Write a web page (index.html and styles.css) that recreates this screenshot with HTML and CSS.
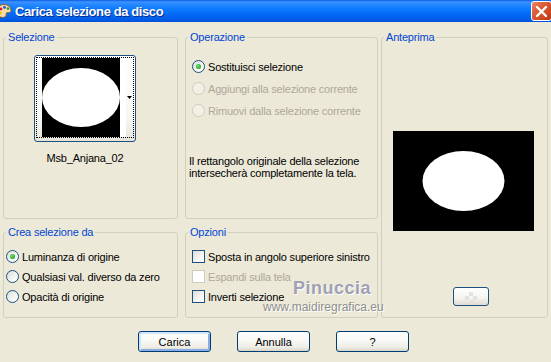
FILE: index.html
```html
<!DOCTYPE html>
<html lang="it">
<head>
    <meta charset="UTF-8">
    <meta name="viewport" content="width=device-width, initial-scale=1.0">
    <title>Carica selezione da disco</title>
    <link rel="stylesheet" href="styles.css">
</head>
<body>
    <div class="titlebar">
        <svg class="app-icon" width="16" height="16" viewBox="0 0 16 16">
            <path d="M8 1.5c4 0 7 2.4 7 5.6 0 2.2-1.6 3-3 2.6-1.2-.3-2 .3-1.8 1.5.2 1.4-.8 3.3-3.4 3.3C3.4 14.5 1 11.6 1 8c0-3.7 3-6.5 7-6.5z" fill="#f3dcaa" stroke="#8a5a2a" stroke-width="1"/>
            <circle cx="5" cy="6" r="1.4" fill="#e02020"/>
            <circle cx="8.5" cy="4.4" r="1.4" fill="#2050e0"/>
            <circle cx="12" cy="5.6" r="1.3" fill="#20a030"/>
            <circle cx="4.4" cy="10" r="1.4" fill="#f0c000"/>
        </svg>
        <span class="title">Carica selezione da disco</span>
        <button class="close" type="button">
            <svg width="13" height="13" viewBox="0 0 13 13"><path d="M2 2l9 9M11 2l-9 9" stroke="#fff" stroke-width="2.4" stroke-linecap="round"/></svg>
        </button>
    </div>

    <div class="dialog">
        <div class="groups">
            <fieldset class="group g-sel">
                <legend>Selezione</legend>
                <button class="thumb" type="button">
                    <span class="thumb-focus">
                        <svg width="78" height="79" viewBox="0 0 78 79">
                            <rect width="78" height="79" fill="#000"/>
                            <ellipse cx="39" cy="39.5" rx="39" ry="29.5" fill="#fff"/>
                        </svg>
                        <span class="thumb-strip"></span>
                        <span class="thumb-arrow">
                            <svg width="5" height="3" viewBox="0 0 5 3"><path d="M0 0h5L2.5 3z" fill="#000"/></svg>
                        </span>
                    </span>
                </button>
                <div class="thumb-name">Msb_Anjana_02</div>
            </fieldset>

            <fieldset class="group g-op">
                <legend>Operazione</legend>
                <div class="options op-list">
                    <div class="opt"><span class="radio checked"></span>Sostituisci selezione</div>
                    <div class="opt disabled"><span class="radio"></span>Aggiungi alla selezione corrente</div>
                    <div class="opt disabled"><span class="radio"></span>Rimuovi dalla selezione corrente</div>
                </div>
                <p class="note">Il rettangolo originale della selezione<br>intersecherà completamente la tela.</p>
            </fieldset>

            <fieldset class="group g-prev">
                <legend>Anteprima</legend>
                <svg class="preview" width="141" height="100" viewBox="0 0 141 100">
                    <rect width="141" height="100" fill="#000"/>
                    <ellipse cx="70.5" cy="50" rx="41" ry="30" fill="#fff"/>
                </svg>
                <button class="small-btn" type="button"><span class="checker"></span></button>
            </fieldset>

            <fieldset class="group g-crea">
                <legend>Crea selezione da</legend>
                <div class="options crea-list">
                    <div class="opt"><span class="radio checked"></span>Luminanza di origine</div>
                    <div class="opt"><span class="radio"></span>Qualsiasi val. diverso da zero</div>
                    <div class="opt"><span class="radio"></span>Opacità di origine</div>
                </div>
            </fieldset>

            <fieldset class="group g-opz">
                <legend>Opzioni</legend>
                <div class="options op-list2">
                    <div class="opt"><span class="check"></span>Sposta in angolo superiore sinistro</div>
                    <div class="opt disabled"><span class="check"></span>Espandi sulla tela</div>
                    <div class="opt"><span class="check"></span>Inverti selezione</div>
                </div>
            </fieldset>
        </div>

        <div class="actions">
            <button class="btn default" type="button">Carica</button>
            <button class="btn" type="button">Annulla</button>
            <button class="btn" type="button">?</button>
        </div>
    </div>

    <div class="watermark">
        <span class="wm-name">Pinuccia</span>
        <span class="wm-site">www.maidiregrafica.eu</span>
    </div>
</body>
</html>
```

FILE: styles.css
```css
body {
    margin: 0;
    width: 551px;
    height: 362px;
    overflow: hidden;
    position: relative;
    background-color: #ECE9D8;
    font-family: "Liberation Sans", Arial, sans-serif;
    font-size: 11px;
    letter-spacing: -0.2px;
    color: #000;
}

/* title bar */
.titlebar {
    height: 22px;
    display: flex;
    align-items: center;
    background: linear-gradient(to bottom, #0A5FE6 0%, #3D93FF 9%, #2A8AFF 18%, #147EFF 35%, #0670FA 55%, #0264F0 75%, #005AE6 90%, #0050D8 100%);
}
.app-icon {
    margin-left: -4px;
    flex: none;
}
.title {
    margin-left: 3px;
    color: #fff;
    font-size: 13px;
    font-weight: bold;
    letter-spacing: -0.4px;
    text-shadow: 1px 1px 0 #0A2A8C;
}
.close {
    margin-left: auto;
    margin-right: -1px;
    width: 21px;
    height: 20px;
    padding: 0;
    border: 1px solid #fff;
    border-radius: 3px;
    background: linear-gradient(135deg, #E88A6C 0%, #DD5F3A 35%, #CF4A22 70%, #B9360F 100%);
    display: flex;
    align-items: center;
    justify-content: center;
}

/* dialog body */
.dialog {
    padding: 9px 0 0 3px;
}
.groups {
    display: grid;
    grid-template-columns: 175px 200px 170px;
    grid-template-rows: 188px 92px;
    row-gap: 7px;
}
.group {
    margin: 0;
    padding: 0;
    min-width: 0;
    border: 1px solid #D0D0BF;
    border-radius: 3px;
}
.group legend {
    margin-left: 2px;
    padding: 0 2px;
    line-height: 13px;
    color: #0046D5;
}
.g-sel { grid-column: 1; grid-row: 1; }
.g-op { grid-column: 2; grid-row: 1; margin-left: 7px; }
.g-prev { grid-column: 3; grid-row: 1 / 3; margin-left: 3px; }
.g-crea { grid-column: 1; grid-row: 2; }
.g-opz { grid-column: 2; grid-row: 2; margin-left: 7px; }

/* selection thumbnail */
.thumb {
    display: block;
    margin: 11px 0 0 30px;
    width: 102px;
    height: 87px;
    padding: 1px 1px 3px 1px;
    border: 1px solid #1C5180;
    border-radius: 3px;
    background: linear-gradient(to bottom, #FFFFFF 0%, #F7F7F4 70%, #E6E4DA 100%);
}
.thumb-focus {
    display: flex;
    height: 79px;
    padding-left: 5px;
    border: 1px dotted #000;
}
.thumb-strip {
    width: 6px;
    background: #fff;
}
.thumb-arrow {
    flex: 1;
    display: flex;
    align-items: center;
    justify-content: center;
}
.thumb-name {
    margin: 10px 0 0 30px;
    width: 102px;
    line-height: 13px;
    text-align: center;
}

/* radio & checkbox rows */
.options {
    display: flex;
    flex-direction: column;
}
.op-list {
    margin-top: 16px;
    gap: 9px;
}
.crea-list, .op-list2 {
    margin-top: 11px;
    gap: 7px;
}
.opt {
    display: flex;
    align-items: center;
    gap: 3px;
    height: 13px;
    white-space: nowrap;
}
.opt.disabled {
    color: #ACA899;
}
.op-list .opt, .op-list2 .opt {
    padding-left: 6px;
}
.crea-list .opt {
    padding-left: 2px;
}
.radio, .check {
    flex: none;
    width: 13px;
    height: 13px;
    box-sizing: border-box;
    border: 1px solid #1C5180;
    background: linear-gradient(135deg, #DCDCD5 0%, #F4F4F0 55%, #FFFFFF 100%);
    position: relative;
}
.radio {
    border-radius: 50%;
}
.radio.checked::after {
    content: "";
    position: absolute;
    left: 3px;
    top: 3px;
    width: 5px;
    height: 5px;
    border-radius: 50%;
    background: radial-gradient(circle at 40% 40%, #7BE07A 0%, #2FB42F 55%, #1A8F1A 100%);
}
.disabled .radio, .disabled .check {
    border-color: #CFCCBE;
    background: #F3F1E6;
}
.disabled .check {
    background: #fff;
}
.note {
    margin: 38px 0 0 3px;
    line-height: 12px;
}

/* preview */
.preview {
    display: block;
    margin: 87px 0 0 11px;
}
.small-btn {
    display: flex;
    align-items: center;
    justify-content: center;
    margin: 56px 0 0 71px;
    width: 36px;
    height: 19px;
    padding: 0;
    border: 1px solid #1C5180;
    border-radius: 3px;
    background: linear-gradient(to bottom, #FFFFFF 0%, #F4F4F0 60%, #DEDBD0 100%);
}
.checker {
    width: 12px;
    height: 10px;
    background:
        linear-gradient(45deg, #E2E2E2 25%, transparent 25%, transparent 75%, #E2E2E2 75%),
        linear-gradient(45deg, #E2E2E2 25%, transparent 25%, transparent 75%, #E2E2E2 75%);
    background-size: 8px 8px;
    background-position: 0 0, 4px 4px;
}

/* bottom buttons */
.actions {
    display: flex;
    gap: 26px;
    margin: 13px 0 0 135px;
}
.btn {
    width: 73px;
    height: 21px;
    padding: 0;
    font: inherit;
    color: #000;
    border: 1px solid #003C74;
    border-radius: 3px;
    background: linear-gradient(to bottom, #FFFFFF 0%, #F8F8F5 45%, #EEEDE6 80%, #D8D4C8 100%);
}
.btn.default {
    box-shadow: inset 1px 1px 0 1px #CEE7FF, inset -1px -1px 0 1px #89ADE4;
}

/* watermark over the dialog */
.watermark {
    position: absolute;
    left: 263px;
    top: 277px;
    display: flex;
    flex-direction: column;
    pointer-events: none;
}
.wm-name {
    margin-left: 30px;
    font-size: 18px;
    font-weight: bold;
    line-height: 22px;
    letter-spacing: 0.5px;
    color: #A0A0B4;
    text-shadow: 1px 1px 0 #fff;
}
.wm-site {
    margin-top: 2px;
    font-size: 12px;
    line-height: 13px;
    letter-spacing: 0;
    color: #8E8E8E;
    text-shadow: 1px 1px 0 #fff;
}
```
